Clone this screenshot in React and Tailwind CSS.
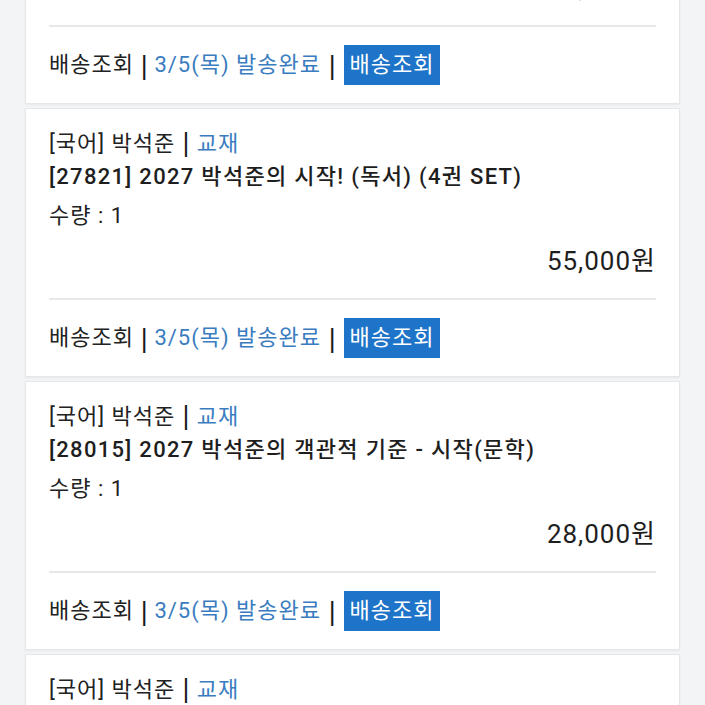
import React from 'react';

const items = [
  { code: '?????', title: '', price: '55,000원' },
  { code: '27821', title: '2027 박석준의 시작! (독서) (4권 SET)', price: '55,000원' },
  { code: '28015', title: '2027 박석준의 객관적 기준 - 시작(문학)', price: '28,000원' },
  { code: '28016', title: '2027 박석준의 객관적 기준 - 시작(독서)', price: '28,000원' },
];

const Pipe = ({ className = '' }) => (
  <span className={`font-['DejaVu_Sans'] text-[25px] leading-none font-normal text-[#1a1a1a] tracking-normal ${className}`}>|</span>
);

const OrderCard = ({ item }) => (
  <div className="bg-white border border-[#e6e7e9] shadow-[0_1px_2px_rgba(0,0,0,0.05)] px-[23px] pt-[18px] tracking-[1px]">
    <div className="text-[22px] leading-[33px] text-[#222]">
      [국어] 박석준 <Pipe /> <span className="text-[#3a7cc0]">교재</span>
    </div>
    <div className="text-[22px] leading-[33px] font-medium text-[#1e1e1e] tracking-[1.3px]">
      [{item.code}] {item.title}
    </div>
    <div className="text-[22px] leading-[33px] mt-[6px] text-[#222]">수량 : 1</div>
    <div className="text-[26px] leading-[34px] mt-[12px] text-right text-[#1e1e1e]">{item.price}</div>
    <div className="h-[2px] bg-[#e8e8e8] mt-[20px]"></div>
    <div className="flex items-center pt-[18px] pb-[18px] text-[22px] leading-[40px] text-[#222]">
      <span>배송조회</span>
      <Pipe className="mx-[6px]" />
      <span className="text-[#3a7cc0]">3/5(목) 발송완료</span>
      <Pipe className="mx-[7px]" />
      <span className="bg-[#1e74c8] text-white px-[6px] h-[40px] flex items-center">배송조회</span>
    </div>
  </div>
);

export default function App() {
  return (
    <div
      className="w-[705px] h-[705px] overflow-hidden bg-[#f3f4f6]"
      style={{ fontFamily: 'Roboto, "Noto Sans CJK KR", "Noto Sans", sans-serif' }}
    >
      <div className="mt-[-165px] mx-[25px] flex flex-col gap-[4px]">
        {items.map((item, i) => (
          <OrderCard key={i} item={item} />
        ))}
      </div>
    </div>
  );
}
